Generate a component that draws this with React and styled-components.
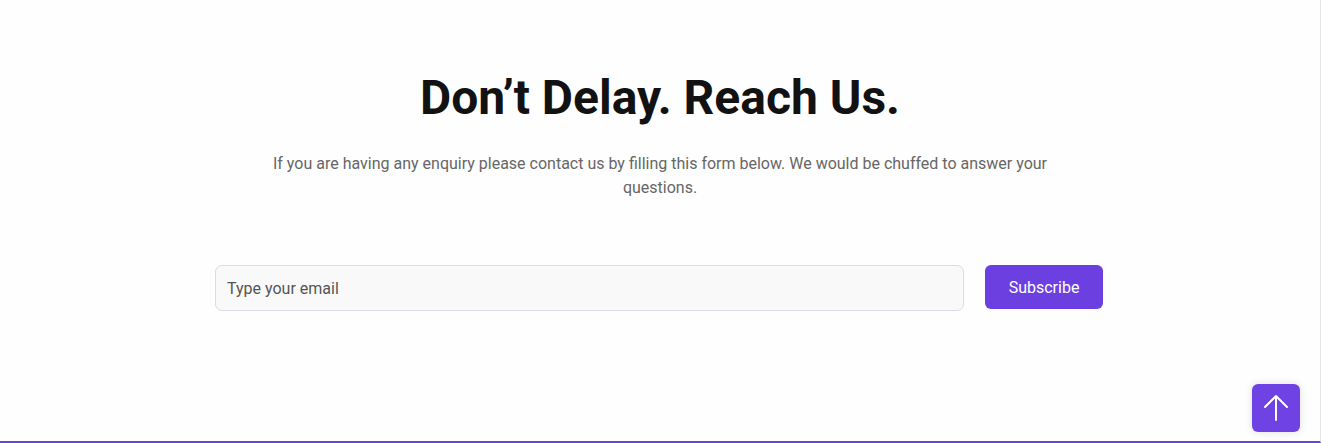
import React from "react";
import styled, { createGlobalStyle } from "styled-components";

const GlobalStyle = createGlobalStyle`
  body {
    margin: 0;
    background: #ffffff;
    font-family: Roboto, "Liberation Sans", sans-serif;
  }
`;

const Section = styled.section`
  position: relative;
  box-sizing: border-box;
  height: 443px;
  width: 1321px;
  background: #fefefe;
  border-right: 1px solid #e6e6e6;
  border-bottom: 2px solid #6c40e0;
  display: flex;
  flex-direction: column;
  align-items: center;
  padding-top: 70px;
`;

const Title = styled.h2`
  margin: 0;
  font-size: 48px;
  font-weight: 700;
  line-height: 56px;
  color: #121212;
  letter-spacing: 0;
`;

const Lead = styled.p`
  margin: 26px 0 0;
  max-width: 790px;
  text-align: center;
  font-size: 16px;
  line-height: 24px;
  color: #666666;
`;

const Form = styled.form`
  margin: 65px 2px 0 0;
  width: 888px;
  display: flex;
  gap: 21px;
  align-items: flex-start;
`;

const EmailInput = styled.input`
  flex: 1;
  min-width: 0;
  box-sizing: border-box;
  height: 46px;
  padding: 0 11px;
  border: 1px solid #dcdae6;
  border-radius: 7px;
  background: #f9f9f9;
  font-family: inherit;
  font-size: 16px;
  color: #333;
  outline: none;

  &::placeholder {
    color: #555555;
  }
`;

const SubscribeButton = styled.button`
  width: 118px;
  height: 44px;
  padding: 0;
  border: none;
  border-radius: 6px;
  background: #6c40e0;
  color: #ffffff;
  font-family: inherit;
  font-size: 16px;
  cursor: pointer;
`;

const ScrollTop = styled.button`
  position: absolute;
  right: 20px;
  bottom: 9px;
  width: 48px;
  height: 48px;
  border: none;
  border-radius: 6px;
  background: #6f43e3;
  box-shadow: 0 0 8px rgba(0, 0, 0, 0.12);
  display: flex;
  align-items: center;
  justify-content: center;
  padding: 0;
  cursor: pointer;
`;

export default function App() {
  return (
    <>
      <GlobalStyle />
      <Section>
        <Title>Don’t Delay. Reach Us.</Title>
        <Lead>
          If you are having any enquiry please contact us by filling this form
          below. We would be chuffed to answer your questions.
        </Lead>
        <Form onSubmit={(e) => e.preventDefault()}>
          <EmailInput type="email" placeholder="Type your email" />
          <SubscribeButton type="submit">Subscribe</SubscribeButton>
        </Form>
        <ScrollTop aria-label="Back to top">
          <svg width="26" height="28" viewBox="0 0 26 28" fill="none">
            <path
              d="M13 26V2M2 13L13 2l11 11"
              stroke="#ffffff"
              strokeWidth="2"
              strokeLinecap="round"
              strokeLinejoin="round"
            />
          </svg>
        </ScrollTop>
      </Section>
    </>
  );
}
